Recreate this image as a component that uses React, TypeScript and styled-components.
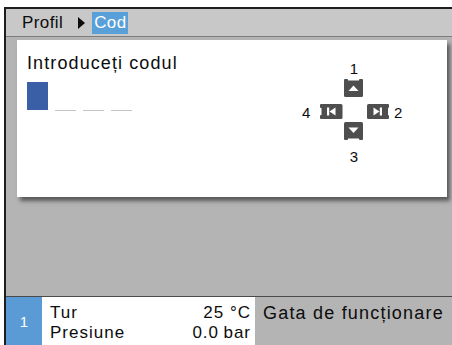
import React from 'react'
import styled, { createGlobalStyle } from 'styled-components';

const GlobalStyle = createGlobalStyle`
  html, body {
    margin: 0;
    padding: 0;
    background: #ffffff;
    font-family: "Liberation Sans", Arial, sans-serif;
  }
  * { box-sizing: border-box; }
`;

interface reading {
    label: string,
    value: string,
}

const readings: reading[] = [
    { label: 'Tur', value: '25 °C' },
    { label: 'Presiune', value: '0.0\u2009bar' },
];

const DPad: React.FC = () => {
  return (
    <svg width="70" height="62" viewBox="0 0 70 62">
      <g fill="#4e4e4e">
        {/* up */}
        <rect x="24" y="1.5" width="19" height="16.5" rx="1.5" />
        <rect x="24" y="0" width="4" height="3" rx="1" />
        <rect x="39" y="0" width="4" height="3" rx="1" />
        {/* down */}
        <rect x="24" y="43" width="19" height="16.5" rx="1.5" />
        <rect x="24" y="58" width="4" height="3" rx="1" />
        <rect x="39" y="58" width="4" height="3" rx="1" />
        {/* left */}
        <rect x="1.5" y="25" width="21" height="15" rx="1.5" />
        <rect x="0" y="25" width="3" height="4" rx="1" />
        <rect x="0" y="36" width="3" height="4" rx="1" />
        {/* right */}
        <rect x="47" y="25" width="21" height="15" rx="1.5" />
        <rect x="66" y="25" width="3" height="4" rx="1" />
        <rect x="66" y="36" width="3" height="4" rx="1" />
      </g>
      <g fill="#ffffff">
        <polygon points="28.5,12 38.5,12 33.5,6.5" />
        <polygon points="28.5,48.5 38.5,48.5 33.5,54" />
        <rect x="7" y="28.5" width="2.2" height="8" />
        <polygon points="9.5,32.5 15.5,28.5 15.5,36.5" />
        <polygon points="53.5,28.5 53.5,36.5 59.5,32.5" />
        <rect x="59.8" y="28.5" width="2.2" height="8" />
      </g>
    </svg>
  )
}

const App: React.FC = () => {
  return (
    <>
      <GlobalStyle />
      <Screen>
        <Header>
          <Crumb>Profil</Crumb>
          <Arrow />
          <Crumb active>Cod</Crumb>
        </Header>
        <Content>
          <Card>
            <CodePanel>
              <Prompt>Introduceți codul</Prompt>
              <Digits>
                <Cursor />
                <Dash />
                <Dash />
                <Dash />
              </Digits>
            </CodePanel>
            <Keypad>
              <Top>1</Top>
              <Side>4</Side>
              <PadCell><DPad /></PadCell>
              <Side right>2</Side>
              <Bottom>3</Bottom>
            </Keypad>
          </Card>
        </Content>
        <StatusBar>
          <Zone>1</Zone>
          <Readings>
            {readings.map(r => (
              <Row key={r.label}>
                <span>{r.label}</span>
                <span>{r.value}</span>
              </Row>
            ))}
          </Readings>
          <State>Gata de funcționare</State>
        </StatusBar>
      </Screen>
    </>
  )
}

export default App;

const Screen = styled.div`
    margin: 7px 0 0 4px;
    height: 338px;
    border-left: 2px solid #1e1e1e;
    border-top: 2px solid #1e1e1e;
    display: flex;
    flex-direction: column;
    overflow: hidden;
`;
const Header = styled.div`
    height: 28px;
    flex: none;
    background-color: #c8c8c8;
    border-bottom: 1px solid #7c7c7c;
    display: flex;
    align-items: center;
    padding-left: 14px;
    gap: 4px;
`;
const Crumb = styled.div<{ active?: boolean }>`
    font-size: 17px;
    letter-spacing: 0.4px;
    color: ${p => p.active ? '#ffffff' : '#0c0c0c'};
    background-color: ${p => p.active ? '#5aa0d8' : 'transparent'};
    padding: ${p => p.active ? '2px 1px 3px 2px' : '0 2px'};
    line-height: 17px;
`;
const Arrow = styled.div`
    width: 0;
    height: 0;
    border-top: 6px solid transparent;
    border-bottom: 6px solid transparent;
    border-left: 7px solid #0c0c0c;
    margin: 0 3px 0 9px;
`;
const Content = styled.div`
    flex: 1;
    background-color: #b4b4b4;
    padding: 3px 5px 0 11px;
`;
const Card = styled.div`
    height: 157px;
    background-color: #ffffff;
    box-shadow: 3px 4px 4px rgba(0, 0, 0, 0.5);
    display: flex;
    justify-content: space-between;
`;
const CodePanel = styled.div`
    padding: 13px 0 0 10px;
    display: flex;
    flex-direction: column;
`;
const Prompt = styled.div`
    font-size: 18px;
    letter-spacing: 1.1px;
    color: #0c0c0c;
    line-height: 21px;
`;
const Digits = styled.div`
    display: flex;
    align-items: flex-end;
    gap: 7px;
    margin-top: 8px;
`;
const Cursor = styled.div`
    width: 21px;
    height: 28px;
    background-color: #3b5fa7;
`;
const Dash = styled.div`
    width: 21px;
    height: 1px;
    background-color: #c4c4c4;
    margin-bottom: -1px;
`;
const Keypad = styled.div`
    display: grid;
    grid-template-columns: 20px 70px 12px;
    grid-template-rows: 17px 62px 17px;
    row-gap: 2px;
    align-items: center;
    margin: 20px 45px 0 0;
    align-self: flex-start;
    font-size: 15px;
    color: #0c0c0c;
    line-height: 17px;
`;
const PadCell = styled.div`
    grid-column: 2;
    grid-row: 2;
    height: 62px;
    svg { display: block; }
`;
const Top = styled.div`
    grid-column: 2;
    grid-row: 1;
    text-align: center;
    padding-right: 2px;
`;
const Bottom = styled.div`
    grid-column: 2;
    grid-row: 3;
    text-align: center;
    padding-right: 2px;
    margin-top: 10px;
`;
const Side = styled.div<{ right?: boolean }>`
    grid-row: 2;
    grid-column: ${p => p.right ? 3 : 1};
    padding-left: ${p => p.right ? '4px' : '2px'};
    margin-top: 4px;
`;
const StatusBar = styled.div`
    flex: none;
    height: 49px;
    border-top: 1px solid #4a4a4a;
    display: flex;
    background-color: #b4b4b4;
    font-size: 17px;
    color: #0c0c0c;
`;
const Zone = styled.div`
    width: 36px;
    background-color: #5b9bd5;
    color: #ffffff;
    font-size: 15px;
    display: flex;
    align-items: center;
    justify-content: center;
`;
const Readings = styled.div`
    width: 213px;
    background-color: #ffffff;
    padding: 6px 4px 0 8px;
    display: flex;
    flex-direction: column;
`;
const Row = styled.div`
    display: flex;
    justify-content: space-between;
    line-height: 20px;
    letter-spacing: 1px;
`;
const State = styled.div`
    padding: 6px 0 0 8px;
    font-size: 18px;
    line-height: 20px;
    letter-spacing: 1.2px;
    white-space: nowrap;
`;
